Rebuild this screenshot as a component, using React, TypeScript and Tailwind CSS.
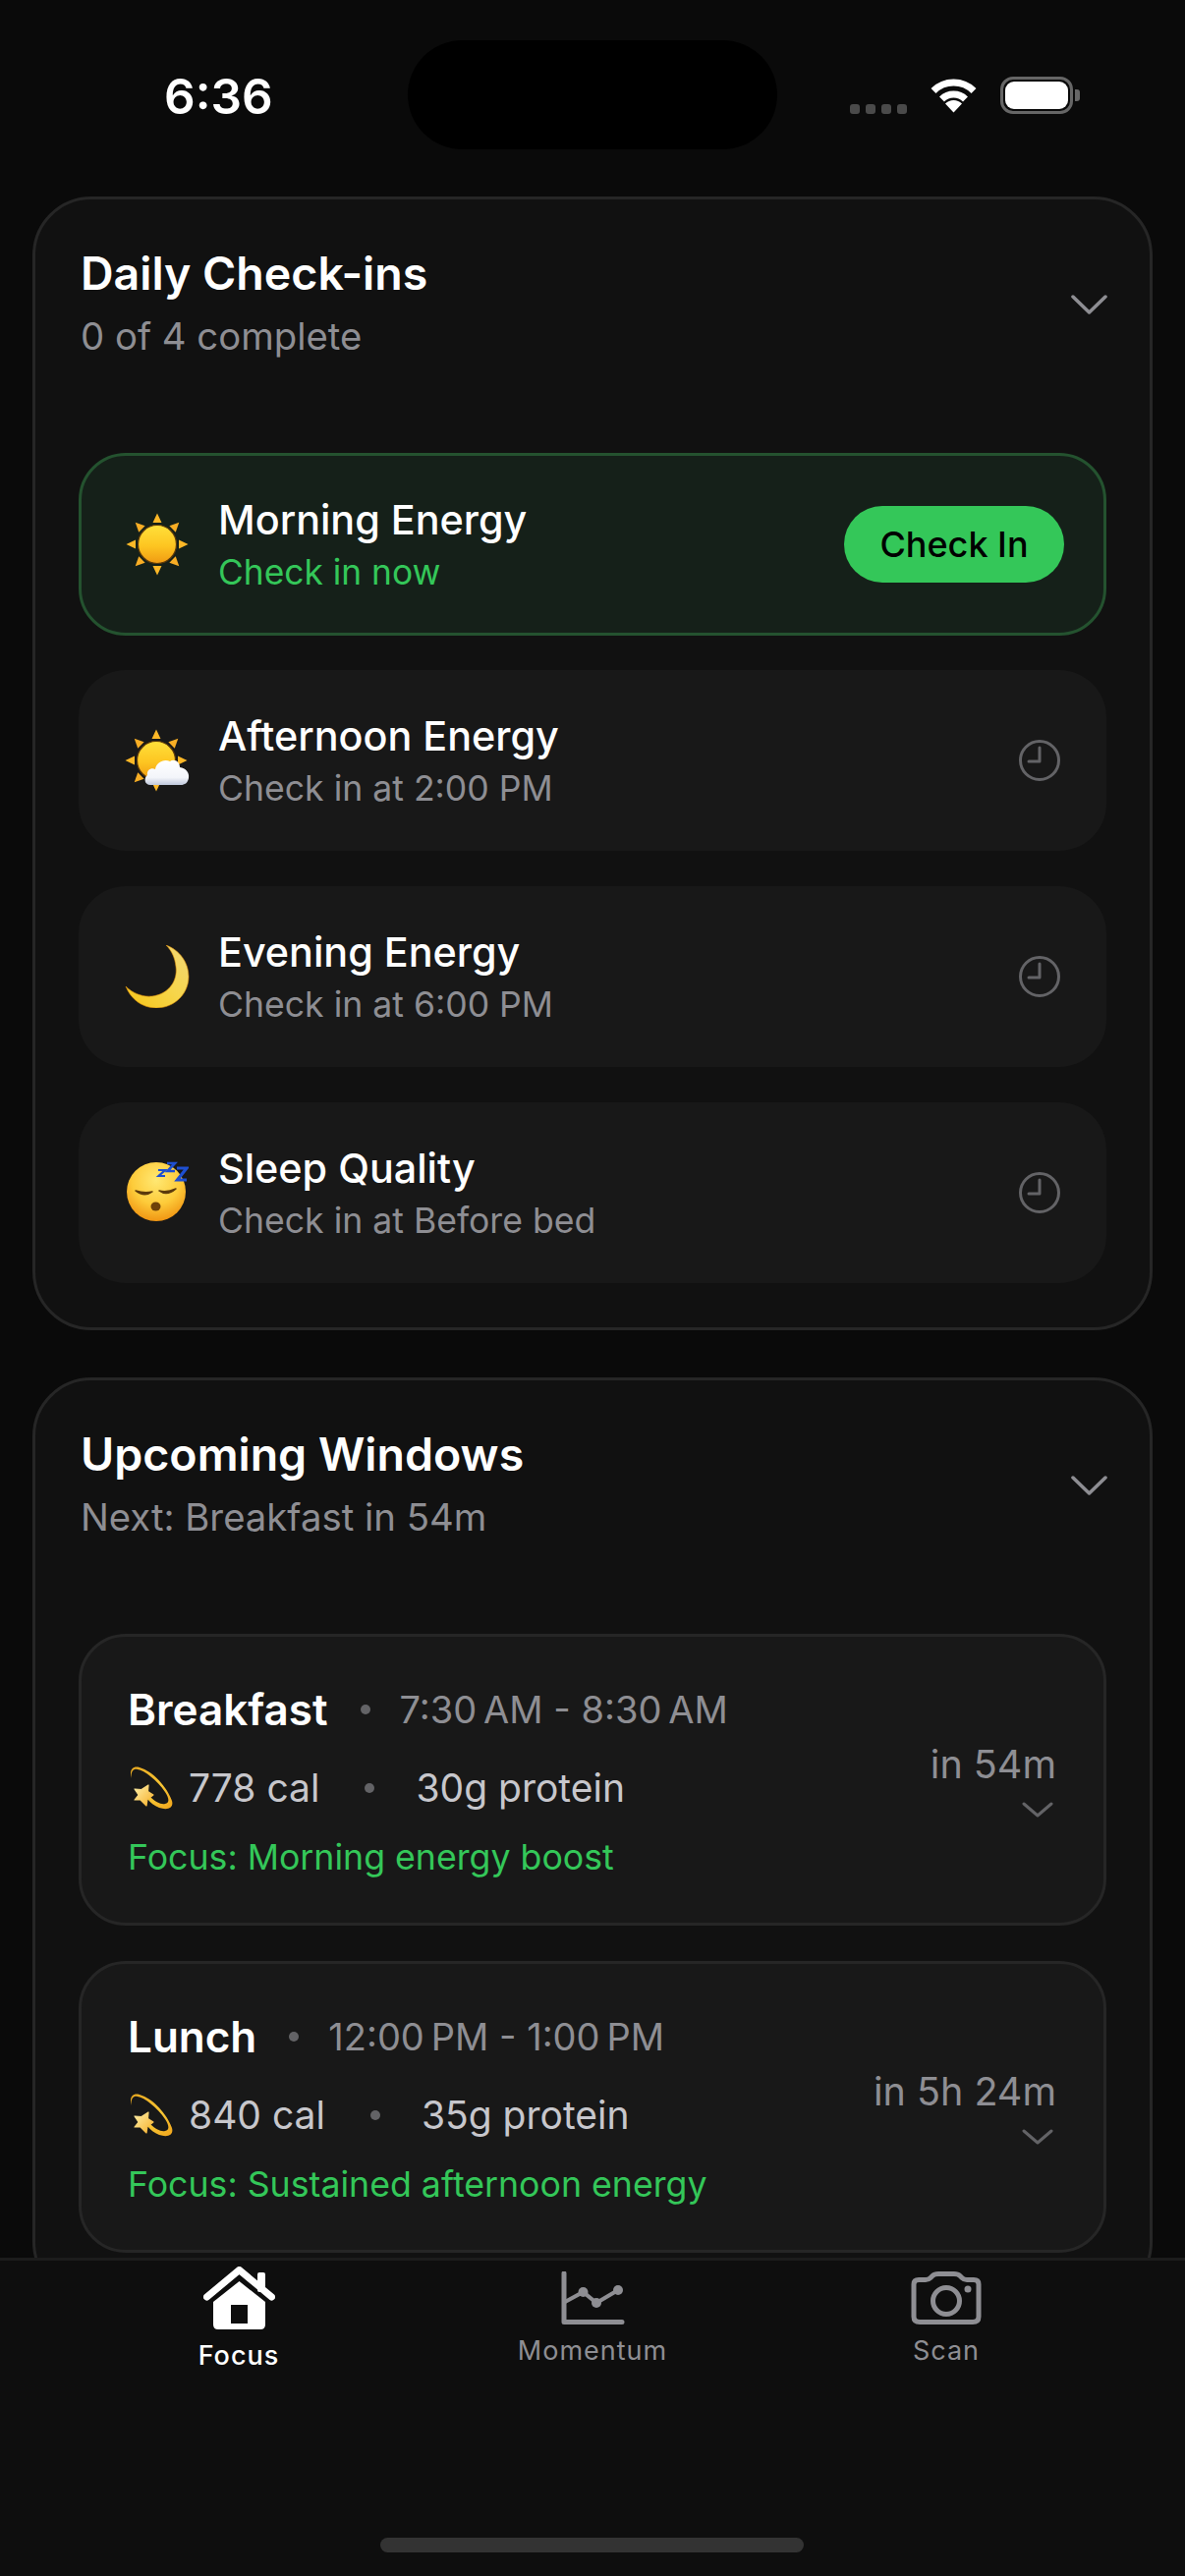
import React from "react";

const FONT = "[font-family:Inter,'Noto_Sans',sans-serif]";

function Chevron({ small }: { small?: boolean }) {
  return small ? (
    <svg className="mr-[3px] mt-[15px] block h-[16px] w-[32px]" viewBox="0 0 32 16" fill="none" stroke="#636366" strokeWidth="3" strokeLinecap="round" strokeLinejoin="round">
      <path d="M2 2 L16 14 L30 2" />
    </svg>
  ) : (
    <svg className="block h-[20px] w-[37px]" viewBox="0 0 37 20" fill="none" stroke="#8e8e93" strokeWidth="3.5" strokeLinecap="round" strokeLinejoin="round">
      <path d="M2 2 L18.5 18 L35 2" />
    </svg>
  );
}

function Clock() {
  return (
    <svg className="block h-[42px] w-[42px]" viewBox="0 0 42 42" fill="none" stroke="#636366" strokeWidth="3" strokeLinecap="round" strokeLinejoin="round">
      <circle cx="21" cy="21" r="19.5" />
      <path d="M21 8 V22 H10" />
    </svg>
  );
}

function SunBody({ id }: { id: string }) {
  const rays = [0, 45, 90, 135, 180, 225, 270, 315];
  return (
    <>
      <defs>
        <linearGradient id={id} x1="0" y1="0" x2="0" y2="1">
          <stop offset="0" stopColor="#ffe03a" />
          <stop offset="0.55" stopColor="#fdc521" />
          <stop offset="1" stopColor="#f09a12" />
        </linearGradient>
      </defs>
      {rays.map((r) => (
        <path key={r} d="M32 0.5 L36.5 10 H27.5 Z" fill={r % 90 === 0 ? "#fdb827" : "#f9ae25"} transform={`rotate(${r} 32 32)`} />
      ))}
      <circle cx="32" cy="32" r="19.5" fill={`url(#${id})`} stroke="#5e3a0a" strokeWidth="1.2" />
    </>
  );
}

function Sun() {
  return (
    <svg className="block h-[64px] w-[64px]" viewBox="0 0 64 64">
      <SunBody id="sunA" />
    </svg>
  );
}

function SunCloud() {
  return (
    <svg className="block h-[64px] w-[66px]" viewBox="0 0 66 64">
      <SunBody id="sunB" />
      <defs>
        <linearGradient id="cloudA" x1="0" y1="0" x2="0" y2="1">
          <stop offset="0" stopColor="#ffffff" />
          <stop offset="0.7" stopColor="#f3f5fa" />
          <stop offset="1" stopColor="#bfc8dc" />
        </linearGradient>
      </defs>
      <path
        d="M26 57 C20 57 19 50 23 47 C22 42 27 39 31 41 C32 34 40 30 46 33 C50 30 56 33 56 39 C62 40 66 44 65 50 C64 55 61 57 57 57 Z"
        fill="url(#cloudA)"
      />
    </svg>
  );
}

function Moon() {
  return (
    <svg className="block h-[64px] w-[66px]" viewBox="0 0 66 64">
      <defs>
        <linearGradient id="moonA" x1="1" y1="0" x2="0" y2="1">
          <stop offset="0" stopColor="#f2d878" />
          <stop offset="0.5" stopColor="#f6d54a" />
          <stop offset="1" stopColor="#f5c416" />
        </linearGradient>
      </defs>
      <path
        d="M42 0 C56 5 65 18 65 32 C65 50 50 64 32 64 C18 64 6 55 1 42 C8 49 18 53 28 52 C44 50 54 37 52 22 C51 13 48 6 42 0 Z"
        fill="url(#moonA)"
        stroke="#d98c0b"
        strokeWidth="0.6"
      />
    </svg>
  );
}

function Sleepy() {
  return (
    <svg className="block h-[64px] w-[64px]" viewBox="0 0 64 64">
      <defs>
        <radialGradient id="faceA" cx="0.5" cy="0.3" r="0.75">
          <stop offset="0" stopColor="#ffe873" />
          <stop offset="0.55" stopColor="#fdcb3a" />
          <stop offset="1" stopColor="#ee8c0c" />
        </radialGradient>
      </defs>
      <circle cx="31" cy="31" r="30" fill="url(#faceA)" />
      <path d="M10 30 Q19 37 27 31 Q19 33 10 30 Z" fill="#5c3a0c" stroke="#5c3a0c" strokeWidth="1.5" strokeLinejoin="round" />
      <path d="M34 30 Q42 36 51 28 Q42 32 34 30 Z" fill="#5c3a0c" stroke="#5c3a0c" strokeWidth="1.5" strokeLinejoin="round" />
      <ellipse cx="30.5" cy="46" rx="5" ry="4.5" fill="#6e4208" />
      <g fill="none" stroke="#1e4fd0" strokeLinejoin="miter">
        <path d="M33 9 H40 L33.5 15 H40" strokeWidth="2.2" />
        <path d="M42 2 H50 L42.5 10 H50" strokeWidth="2.6" />
        <path d="M52 7 H62 L52.5 19 H62" strokeWidth="3.2" />
      </g>
    </svg>
  );
}

function Dizzy({ id }: { id: string }) {
  return (
    <svg className="block h-[45px] w-[44px] shrink-0" viewBox="0 0 44 45">
      <defs>
        <linearGradient id={`${id}r`} x1="0" y1="0" x2="1" y2="1">
          <stop offset="0" stopColor="#e9a920" />
          <stop offset="0.6" stopColor="#f7c534" />
          <stop offset="1" stopColor="#f0a51c" />
        </linearGradient>
        <linearGradient id={`${id}s`} x1="0" y1="0" x2="1" y2="1">
          <stop offset="0" stopColor="#fff0a8" />
          <stop offset="1" stopColor="#f5ae28" />
        </linearGradient>
      </defs>
      <path
        d="M2 13 C-1 5 3 0 10 2 C24 6 38 22 43 36 C45 43 39 46 30 43 C25 41 21 38 18 34 L21 32 C26 37 32 40 36 39 C41 38 40 33 36 27 C28 15 15 5 8 4 C3 3 1 7 2 13 Z"
        fill={`url(#${id}r)`}
      />
      <path d="M19 20 L18.5 26.5 L24 30 L18 34.5 L17 41 L11 35 L5 35 L9 30 L5 24 L12 24.5 Z" fill={`url(#${id}s)`} stroke={`url(#${id}s)`} strokeWidth="1.2" strokeLinejoin="round" />
    </svg>
  );
}

function Dot() {
  return <span className="block h-[10px] w-[10px] shrink-0 rounded-full bg-[#636366]" />;
}

function Header({ title, sub }: { title: string; sub: string }) {
  return (
    <div className="flex items-start justify-between pl-[46px] pr-[43px] pt-[46px]">
      <div>
        <div className="text-[46.5px] font-semibold leading-[58px] text-white">{title}</div>
        <div className="mt-[12px] text-[38.300px] leading-[47px] text-[#8e8e93]">{sub}</div>
      </div>
      <div className="mt-[51px]">
        <Chevron />
      </div>
    </div>
  );
}

function Rest({ icon, title, sub }: { icon: React.ReactNode; title: string; sub: string }) {
  return (
    <div className="flex h-[184px] items-center rounded-[48px] bg-[#181818] pl-[47px] pr-[47px]">
      <div className="flex w-[66px] justify-center">{icon}</div>
      <div className="ml-[29px] flex-1">
        <div className="text-[41.3px] leading-[48px] text-white [font-weight:450]">{title}</div>
        <div className="mt-[9px] text-[35.6px] leading-[42px] text-[#8e8e93]">{sub}</div>
      </div>
      <Clock />
    </div>
  );
}

function Meal(props: { id: string; name: string; time: string; cal: string; protein: string; focus: string; when: string }) {
  return (
    <div className="flex h-[297px] items-center justify-between rounded-[48px] border-[3px] border-[#262626] bg-[#181818] pl-[47px] pr-[48px]">
      <div>
        <div className="flex items-center">
          <span className="text-[44px] font-semibold leading-[54px] text-white">{props.name}</span>
          <span className="ml-[33px]"><Dot /></span>
          <span className="ml-[30px] text-[38px] leading-[54px] text-[#8e8e93]">{props.time}</span>
        </div>
        <div className="mt-[30px] flex items-center">
          <span className="ml-[2px]"><Dizzy id={props.id} /></span>
          <span className="ml-[16px] text-[39px] leading-[46px] text-[#c7c7cc]">{props.cal}</span>
          <span className="ml-[46px]"><Dot /></span>
          <span className="ml-[42px] text-[39px] leading-[46px] text-[#c7c7cc]">{props.protein}</span>
        </div>
        <div className="mt-[26px] text-[35.7px] leading-[42px] text-[#34c759]">{props.focus}</div>
      </div>
      <div className="flex flex-col items-end">
        <span className="text-[39.5px] leading-[46px] text-[#8e8e93]">{props.when}</span>
        <Chevron small />
      </div>
    </div>
  );
}

export default function App() {
  return (
    <div className={`${FONT} relative flex h-[2622px] w-[1206px] flex-col overflow-hidden bg-[#0a0a0a]`}>
      <div className="min-h-0 flex-1 overflow-hidden">
        {/* Status bar */}
        <div className="flex h-[200px] items-start">
          <div className="ml-[167px] mt-[67px] w-[109px] text-[49.5px] font-semibold leading-[62px] text-white">6:36</div>
          <div className="ml-[139px] mt-[41px] h-[111px] w-[376px] rounded-[56px] bg-black" />
          <div className="ml-[74px] mt-[106px] flex gap-[6px]">
            <span className="h-[10px] w-[10px] rounded-[3px] bg-[#4a4a4a]" />
            <span className="h-[10px] w-[10px] rounded-[3px] bg-[#4a4a4a]" />
            <span className="h-[10px] w-[10px] rounded-[3px] bg-[#4a4a4a]" />
            <span className="h-[10px] w-[10px] rounded-[3px] bg-[#4a4a4a]" />
          </div>
          <svg className="ml-[22px] mt-[79px] block h-[36px] w-[51px]" viewBox="0 0 51 36" fill="none" stroke="#fff" strokeWidth="7">
            <path d="M5 13.5 A29 29 0 0 1 46 13.5" />
            <path d="M13.5 22 A17 17 0 0 1 37.5 22" />
            <path d="M25.5 35.5 L17 26.5 A12 12 0 0 1 34 26.5 Z" fill="#fff" stroke="none" />
          </svg>
          <div className="ml-[22px] mt-[78px] flex items-center">
            <div className="h-[38px] w-[74px] rounded-[13px] border-[3px] border-[#666666] p-[2px]">
              <div className="h-full w-full rounded-[9px] bg-white" />
            </div>
            <div className="ml-[2px] h-[12px] w-[5px] rounded-r-[3px] bg-[#666666]" />
          </div>
        </div>

        {/* Daily check-ins */}
        <div className="mx-[33px] rounded-[60px] border-[3px] border-[#262626] bg-[#111111] pb-[45px]">
          <Header title="Daily Check-ins" sub="0 of 4 complete" />
          <div className="mt-[95px] flex flex-col px-[44px]">
            <div className="flex h-[186px] items-center rounded-[48px] border-[3px] border-[#24522f] bg-[#152019] pl-[44px] pr-[40px]">
              <div className="flex w-[66px] justify-center"><Sun /></div>
              <div className="ml-[29px] flex-1">
                <div className="text-[41.3px] leading-[48px] text-white [font-weight:450]">Morning Energy</div>
                <div className="mt-[9px] text-[35.3px] leading-[42px] text-[#34c759]">Check in now</div>
              </div>
              <button className="h-[78px] w-[224px] rounded-full bg-[#34c759] text-center text-[36px] leading-[78px] text-black [font-weight:450]">Check In</button>
            </div>
            <div className="mt-[35px] flex flex-col gap-[36px]">
              <Rest icon={<SunCloud />} title="Afternoon Energy" sub="Check in at 2:00 PM" />
              <Rest icon={<Moon />} title="Evening Energy" sub="Check in at 6:00 PM" />
              <Rest icon={<Sleepy />} title="Sleep Quality" sub="Check in at Before bed" />
            </div>
          </div>
        </div>

        {/* Upcoming windows */}
        <div className="mx-[33px] mt-[48px] rounded-[60px] border-[3px] border-[#262626] bg-[#111111] pb-[46px]">
          <Header title="Upcoming Windows" sub="Next: Breakfast in 54m" />
          <div className="mt-[95px] flex flex-col gap-[36px] px-[44px]">
            <Meal id="dzA" name="Breakfast" time={"7:30\u202fAM - 8:30\u202fAM"} cal="778 cal" protein="30g protein" focus="Focus: Morning energy boost" when="in 54m" />
            <Meal id="dzB" name="Lunch" time={"12:00\u202fPM - 1:00\u202fPM"} cal="840 cal" protein="35g protein" focus="Focus: Sustained afternoon energy" when="in 5h 24m" />
          </div>
        </div>
      </div>

      {/* Tab bar */}
      <div className="flex h-[324px] shrink-0 border-t-[3px] border-[#1c1c1c] bg-[#0e0e0e] px-[63px]">
        <div className="flex w-[360px] flex-col items-center pt-[6px]">
          <svg className="block h-[64px] w-[73px]" viewBox="0 0 73 64" fill="#fff">
            <rect x="55" y="6" width="8" height="20" rx="2" />
            <path d="M3.5 31 L36.5 3.5 L69.5 31" fill="none" stroke="#fff" strokeWidth="7" strokeLinecap="round" strokeLinejoin="round" />
            <path d="M36.5 15 L63 36 V59 Q63 64 58 64 H15 Q10 64 10 59 V36 Z" />
            <rect x="28" y="39" width="17" height="19" fill="#0e0e0e" />
          </svg>
          <span className="mt-[11px] text-[27px] font-medium leading-[32px] tracking-[1px] text-white">Focus</span>
        </div>
        <div className="flex w-[360px] flex-col items-center pt-[11px]">
          <svg className="block h-[54px] w-[65px]" viewBox="0 0 65 54" fill="none" stroke="#8e8e93">
            <path d="M3 2 V51.500 H62" strokeWidth="5" strokeLinecap="round" strokeLinejoin="round" />
            <path d="M4 31 L22.5 21 L36 32 L58 19" strokeWidth="4" />
            <circle cx="22.5" cy="21" r="5" fill="#8e8e93" stroke="none" />
            <circle cx="36" cy="32" r="5" fill="#8e8e93" stroke="none" />
            <circle cx="58" cy="19" r="5" fill="#8e8e93" stroke="none" />
          </svg>
          <span className="mt-[11px] text-[27px] leading-[32px] tracking-[1px] text-[#8e8e93]">Momentum</span>
        </div>
        <div className="flex w-[360px] flex-col items-center pt-[11px]">
          <svg className="block h-[54px] w-[72px]" viewBox="0 0 72 54" fill="none" stroke="#8e8e93" strokeWidth="5" strokeLinejoin="round">
            <path d="M3 13 Q3 8.500 8 8.500 H15 Q18 8.500 20 6.500 L22 4.500 Q24 2.500 28 2.500 H44 Q48 2.500 50 4.500 L52 6.500 Q54 8.500 57 8.500 H64 Q69 8.500 69 13 V46 Q69 51.500 63 51.500 H9 Q3 51.500 3 46 Z" />
            <circle cx="36" cy="30" r="13.500" />
            <circle cx="58" cy="18" r="3.500" fill="#8e8e93" stroke="none" />
          </svg>
          <span className="mt-[11px] text-[27px] leading-[32px] tracking-[1px] text-[#8e8e93]">Scan</span>
        </div>
      </div>

      {/* Home indicator */}
      <div className="pointer-events-none absolute left-[387px] top-[2583px] h-[15px] w-[431px] rounded-full bg-[#333333]" />
    </div>
  );
}
